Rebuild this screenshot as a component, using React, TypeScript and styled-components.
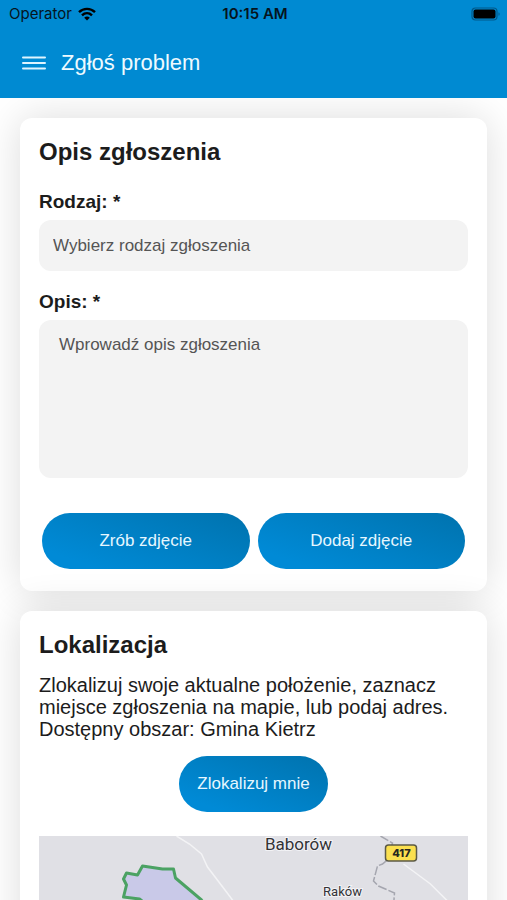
import React from "react";
import styled, { createGlobalStyle } from "styled-components";

const GlobalStyle = createGlobalStyle`
  *, *::before, *::after { box-sizing: border-box; }
  body {
    margin: 0;
    background: #ffffff;
    color: #1c1c1c;
    font-family: "Liberation Sans", Arial, sans-serif;
  }
  button, select, textarea { font: inherit; }
`;

const Screen = styled.div`
  display: flex;
  flex-direction: column;
  height: 100vh;
  overflow: hidden;
`;

const TopBar = styled.header`
  flex: none;
  background: #008ad2;
`;

const StatusBar = styled.div`
  display: grid;
  grid-template-columns: 1fr auto 1fr;
  align-items: center;
  height: 28px;
  padding: 0 6px 0 9px;
  color: #06141d;
  font-family: Inter, sans-serif;
  font-size: 15px;
  line-height: 20px;
`;

const Carrier = styled.div`
  display: flex;
  align-items: center;
  gap: 6px;
`;

const Clock = styled.time`
  font-weight: 600;
`;

const BatterySlot = styled.div`
  display: flex;
  justify-content: flex-end;
`;

const TitleBar = styled.div`
  display: flex;
  align-items: center;
  gap: 15px;
  height: 70px;
  padding: 0 22px;
`;

const MenuButton = styled.button`
  display: flex;
  padding: 0;
  border: 0;
  background: none;
  color: #dff5ff;
  cursor: pointer;
`;

const PageTitle = styled.h1`
  margin: 0;
  color: #eefaff;
  font-size: 22px;
  font-weight: 400;
  line-height: 28px;
`;

const Content = styled.main`
  display: flex;
  flex: 1;
  flex-direction: column;
  gap: 20px;
  min-height: 0;
  padding: 20px;
  overflow-y: auto;
  scrollbar-width: none;
`;

const Card = styled.section`
  display: flex;
  flex: none;
  flex-direction: column;
  padding: 20px 19px 22px;
  border-radius: 12px;
  background: #ffffff;
  box-shadow: 0 0 40px rgba(0, 0, 0, 0.14);
`;

const CardTitle = styled.h2`
  margin: 0 0 5px;
  font-size: 24px;
  font-weight: 700;
  line-height: 28px;
`;

const Field = styled.div`
  display: flex;
  flex-direction: column;
  gap: 6px;
  margin-top: 19px;
`;

const FieldLabel = styled.label`
  font-size: 19px;
  font-weight: 700;
  line-height: 24px;
`;

const SelectBox = styled.select`
  width: 100%;
  height: 51px;
  padding: 0 14px;
  border: 0;
  border-radius: 12px;
  appearance: none;
  background: #f3f3f3;
  color: #555555;
  font-size: 17px;
`;

const TextBox = styled.textarea`
  display: block;
  width: 100%;
  height: 158px;
  padding: 14px 20px;
  border: 0;
  border-radius: 12px;
  resize: none;
  background: #f3f3f3;
  color: #555555;
  font-size: 17px;
  line-height: 22px;
  &::placeholder {
    color: #555555;
    opacity: 1;
  }
`;

const PhotoActions = styled.div`
  display: grid;
  grid-template-columns: 1fr 1fr;
  gap: 8px;
  margin-top: 35px;
  padding: 0 3px;
`;

const PillButton = styled.button`
  height: 56px;
  padding: 0 18px;
  border: 0;
  border-radius: 28px;
  background: linear-gradient(20deg, #008ad6 15%, #0074b0 95%);
  color: #e6f7ff;
  font-size: 17px;
  cursor: pointer;
`;

const LocateButton = styled(PillButton)`
  align-self: center;
  margin: 16px 0 24px;
`;

const Intro = styled.p`
  margin: 10px 0 0;
  font-size: 20px;
  line-height: 22px;
`;

const MapView = styled.svg`
  display: block;
  width: 100%;
  height: 300px;
  background: #e0e0e5;
`;

const WifiIcon = () => (
  <svg width="18" height="14" viewBox="0 0 18 14" aria-hidden="true">
    <g fill="none" stroke="#000000" strokeWidth="2.4">
      <path d="M1 5.2C5.5 .8 12.500 .8 17 5.200" />
      <path d="M4 8.300C6.900 5.500 11.100 5.500 14 8.300" />
    </g>
    <path d="M9 13.500L6.200 10.700C7.800 9.200 10.200 9.200 11.800 10.700Z" fill="#000000" />
  </svg>
);

const BatteryIcon = () => (
  <svg width="30" height="14" viewBox="0 0 30 14" aria-hidden="true">
    <rect x="1" y="1" width="25" height="12" rx="3.500" fill="none" stroke="#00598a" strokeWidth="1.200" />
    <rect x="2.500" y="2.500" width="22" height="9" rx="2" fill="#000000" />
    <path d="M27.500 5.200C29 5.700 29 8.300 27.500 8.800Z" fill="#00598a" />
  </svg>
);

const MenuIcon = () => (
  <svg width="24" height="16" viewBox="0 0 24 16" aria-hidden="true">
    <path d="M1 2.500H23M1 8H23M1 13.500H23" stroke="currentColor" strokeWidth="2" strokeLinecap="round" />
  </svg>
);

const AreaMap = () => (
  <MapView viewBox="0 0 430 300" preserveAspectRatio="xMidYMin slice" role="img" aria-label="Mapa">
    <g fill="none" stroke="#f3f3f5" strokeWidth="1.500">
      <path d="M138 0L151 8L163 18L169 31L188 56L215 92L242 130" />
      <path d="M365 28L392 48L408 64L430 92" />
    </g>
    <path
      d="M104 30L124 33H135L137 42L163 64L176 84L160 130L120 118L110 70L101 63L85 61L88 49L85 43L88 37L99 39Z"
      fill="#c9c9e8"
      stroke="#4ba263"
      strokeWidth="3"
      strokeLinejoin="round"
    />
    <path
      d="M342 0L354 7L350 23L344 28L339 30L335 45L340 50L356 57L355 70L348 92L358 130"
      fill="none"
      stroke="#a5a6af"
      strokeWidth="1.500"
      strokeDasharray="9 2"
    />
    <g fill="#333336" stroke="#f2f2f5" strokeWidth="2" paintOrder="stroke" fontFamily="Roboto, sans-serif" textAnchor="middle">
      <text x="260" y="14" fontSize="17">Baborów</text>
      <text x="304" y="60" fontSize="13">Raków</text>
    </g>
    <rect x="347" y="9" width="31" height="16" rx="3" fill="#fbe04f" stroke="#5c5a45" strokeWidth="1.500" />
    <text x="363" y="21" fill="#282820" fontFamily="Inter, sans-serif" fontSize="11" fontWeight="800" textAnchor="middle">
      417
    </text>
  </MapView>
);

export default function App() {
  return (
    <Screen>
      <GlobalStyle />
      <TopBar>
        <StatusBar>
          <Carrier>
            Operator
            <WifiIcon />
          </Carrier>
          <Clock>10:15 AM</Clock>
          <BatterySlot>
            <BatteryIcon />
          </BatterySlot>
        </StatusBar>
        <TitleBar>
          <MenuButton type="button" aria-label="Menu">
            <MenuIcon />
          </MenuButton>
          <PageTitle>Zgłoś problem</PageTitle>
        </TitleBar>
      </TopBar>
      <Content>
        <Card>
          <CardTitle>Opis zgłoszenia</CardTitle>
          <Field>
            <FieldLabel htmlFor="kind">Rodzaj: *</FieldLabel>
            <SelectBox id="kind" required defaultValue="">
              <option value="">Wybierz rodzaj zgłoszenia</option>
            </SelectBox>
          </Field>
          <Field>
            <FieldLabel htmlFor="description">Opis: *</FieldLabel>
            <TextBox id="description" required placeholder="Wprowadź opis zgłoszenia" />
          </Field>
          <PhotoActions>
            <PillButton type="button">Zrób zdjęcie</PillButton>
            <PillButton type="button">Dodaj zdjęcie</PillButton>
          </PhotoActions>
        </Card>
        <Card>
          <CardTitle>Lokalizacja</CardTitle>
          <Intro>
            Zlokalizuj swoje aktualne położenie, zaznacz miejsce zgłoszenia na mapie, lub podaj adres.
            <br />
            Dostępny obszar: Gmina Kietrz
          </Intro>
          <LocateButton type="button">Zlokalizuj mnie</LocateButton>
          <AreaMap />
        </Card>
      </Content>
    </Screen>
  );
}
